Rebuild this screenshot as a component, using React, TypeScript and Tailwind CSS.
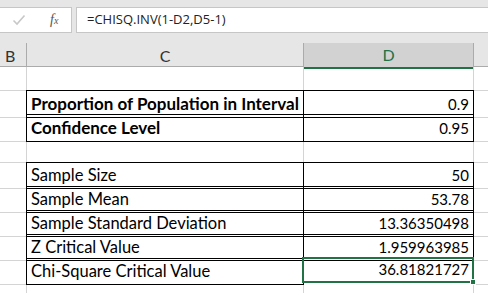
import React from "react";

const rows: { label: string; value: string; bold?: boolean; boxed: boolean; selected?: boolean }[] = [
  { label: "", value: "", boxed: false },
  { label: "Proportion of Population in Interval", value: "0.9", bold: true, boxed: true },
  { label: "Confidence Level", value: "0.95", bold: true, boxed: true },
  { label: "", value: "", boxed: false },
  { label: "Sample Size", value: "50", boxed: true },
  { label: "Sample Mean", value: "53.78", boxed: true },
  { label: "Sample Standard Deviation", value: "13.36350498", boxed: true },
  { label: "Z Critical Value", value: "1.959963985", boxed: true },
  { label: "Chi-Square Critical Value", value: "36.81821727", boxed: true, selected: true },
];

export default function App() {
  return (
    <div className="w-[488px] h-[293px] overflow-hidden bg-white" style={{ fontFamily: "Lato, 'Open Sans', sans-serif" }}>
      {/* Formula bar */}
      <div className="h-[43px] bg-[#e6e6e6] pt-[7px] flex gap-[4px]">
        <div className="w-[72px] h-[26px] bg-white border border-l-0 border-[#c6c6c6] flex items-center">
          <svg width="14" height="12" viewBox="0 0 14 12" className="ml-[12px]">
            <path d="M1.5 6.5 L5 10 L12.5 1.5" fill="none" stroke="#c8c8c8" strokeWidth="1.6" />
          </svg>
          <span className="ml-[24px] text-[14px] italic text-[#555] leading-none" style={{ fontFamily: "'Liberation Serif', serif" }}>
            f<span className="text-[10px]">x</span>
          </span>
        </div>
        <div className="flex-1 h-[26px] bg-white border border-r-0 border-[#c6c6c6] flex items-center pl-[10px] text-[13px] text-[#222]" style={{ fontFamily: "'Open Sans', sans-serif" }}>
          =CHISQ.INV(1-D2,D5-1)
        </div>
      </div>

      {/* Column headers */}
      <div className="grid grid-cols-[27px_277px_170px_1fr] h-[24px] bg-[#e6e6e6] border-b border-[#ababab] text-[16px] text-[#333]">
        <div className="border-r border-[#ababab] flex items-center pl-[5px]">B</div>
        <div className="border-r border-[#ababab] flex items-center justify-center">C</div>
        <div className="border-r border-[#ababab] bg-[#d2d2d2] border-b-2 border-b-[#217346] flex items-center justify-center text-[#217346]">D</div>
        <div />
      </div>

      {/* Sheet rows */}
      {rows.map((r, i) => (
        <div key={i} className="grid grid-cols-[27px_277px_170px_1fr] h-[24px] text-[15px] text-black">
          <div className="border-r border-b border-[#d4d4d4]" />
          <div
            className={
              r.boxed
                ? "relative -ml-px -mt-px border border-black flex items-end pl-[4px] whitespace-nowrap" + (r.bold ? " font-bold text-[17px]" : " text-[16.5px]")
                : "border-r border-b border-[#d4d4d4]"
            }
          >
            {r.label}
          </div>
          <div
            className={
              r.selected
                ? "relative -ml-[2px] -mt-[2px] h-[26px] w-[172px] border-2 border-[#217346] flex items-end justify-end pr-[3px] pb-[1px]"
                : r.boxed
                ? "relative -ml-px -mt-px border border-black flex items-end justify-end pr-[4px] pb-[1px]"
                : "border-r border-b border-[#d4d4d4]"
            }
          >
            {r.value}
            {r.selected && <span className="absolute -right-[4px] -bottom-[4px] w-[6px] h-[6px] bg-[#217346] border border-white" />}
          </div>
          <div className="border-b border-[#d4d4d4]" />
        </div>
      ))}
      <div className="grid grid-cols-[27px_277px_170px_1fr] h-[24px]">
        <div className="border-r border-[#d4d4d4]" />
        <div className="border-r border-[#d4d4d4]" />
        <div className="border-r border-[#d4d4d4]" />
        <div />
      </div>
    </div>
  );
}
